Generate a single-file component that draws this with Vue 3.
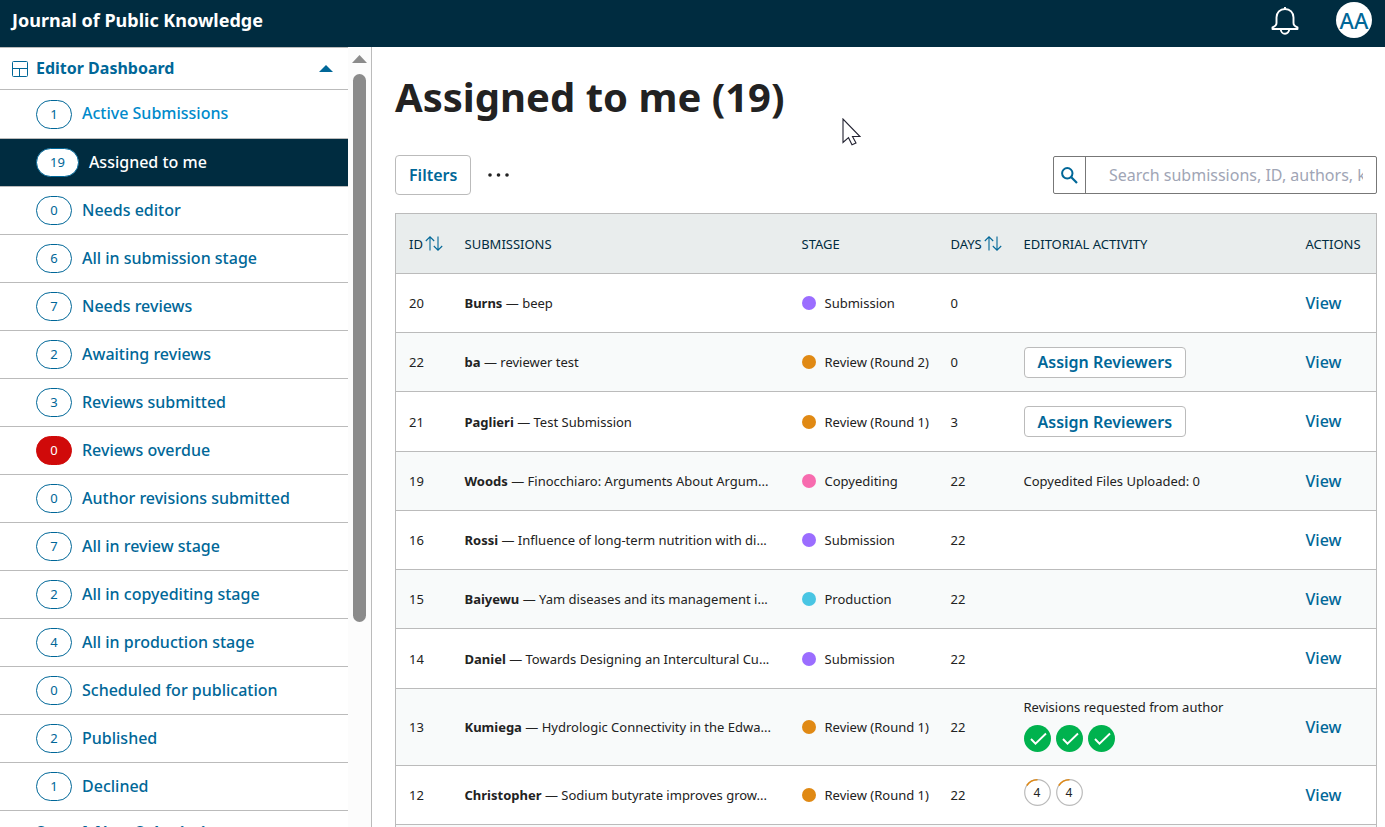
<script setup>
import { ref } from 'vue'

const navItems = [
  { count: 1, label: 'Active Submissions', state: 'hover' },
  { count: 19, label: 'Assigned to me', state: 'active' },
  { count: 0, label: 'Needs editor' },
  { count: 6, label: 'All in submission stage' },
  { count: 7, label: 'Needs reviews' },
  { count: 2, label: 'Awaiting reviews' },
  { count: 3, label: 'Reviews submitted' },
  { count: 0, label: 'Reviews overdue', state: 'overdue' },
  { count: 0, label: 'Author revisions submitted' },
  { count: 7, label: 'All in review stage' },
  { count: 2, label: 'All in copyediting stage' },
  { count: 4, label: 'All in production stage' },
  { count: 0, label: 'Scheduled for publication' },
  { count: 2, label: 'Published' },
  { count: 1, label: 'Declined' },
]

const submissions = [
  { id: 20, author: 'Burns', title: 'beep', stage: 'Submission', tone: 'submission', days: 0 },
  { id: 22, author: 'ba', title: 'reviewer test', stage: 'Review (Round 2)', tone: 'review', days: 0, action: 'Assign Reviewers' },
  { id: 21, author: 'Paglieri', title: 'Test Submission', stage: 'Review (Round 1)', tone: 'review', days: 3, action: 'Assign Reviewers' },
  { id: 19, author: 'Woods', title: 'Finocchiaro: Arguments About Argum...', stage: 'Copyediting', tone: 'copyediting', days: 22, note: 'Copyedited Files Uploaded: 0' },
  { id: 16, author: 'Rossi', title: 'Influence of long-term nutrition with di...', stage: 'Submission', tone: 'submission', days: 22 },
  { id: 15, author: 'Baiyewu', title: 'Yam diseases and its management i...', stage: 'Production', tone: 'production', days: 22 },
  { id: 14, author: 'Daniel', title: 'Towards Designing an Intercultural Cu...', stage: 'Submission', tone: 'submission', days: 22 },
  { id: 13, author: 'Kumiega', title: 'Hydrologic Connectivity in the Edwa...', stage: 'Review (Round 1)', tone: 'review', days: 22, note: 'Revisions requested from author', done: 3 },
  { id: 12, author: 'Christopher', title: 'Sodium butyrate improves grow...', stage: 'Review (Round 1)', tone: 'review', days: 22, pending: [4, 4] },
]

const query = ref('')
</script>

<template>
  <div class="app">
    <header class="topbar">
      <a class="brand" href="#">Journal of Public Knowledge</a>
      <div class="tools">
        <button class="bell" type="button" aria-label="Notifications">
          <svg width="28" height="30" viewBox="0 0 28 30" fill="none" stroke="#fff" stroke-width="1.9" stroke-linejoin="round">
            <path d="M14 1v2M14 3c-5 0-8.500 3.600-8.500 8.500v5.500c0 2.200-1.300 3.300-4 4.300V23h25V21.300c-2.700-1-4-2.100-4-4.300v-5.500C22.500 6.600 19 3 14 3z" />
            <path d="M9.800 23.200a4.200 4.600 0 0 0 8.400 0" />
          </svg>
        </button>
        <button class="avatar" type="button">AA</button>
      </div>
    </header>

    <div class="body">
      <aside class="sidebar">
        <nav class="nav">
          <button class="nav-head" type="button">
            <svg width="16" height="16" viewBox="0 0 16 16" fill="none" stroke="#006798" stroke-width="1">
              <rect x=".5" y=".5" width="15" height="15" rx="1" />
              <path d="M.5 7.500h15M7.500 7.500v8" />
            </svg>
            <span class="nav-title">Editor Dashboard</span>
            <svg width="14" height="7" viewBox="0 0 14 7"><path d="M7 0l7 7H0z" fill="#006798" /></svg>
          </button>
          <a v-for="item in navItems" :key="item.label" href="#" class="nav-item" :class="item.state">
            <span class="count">{{ item.count }}</span>
            <span class="label">{{ item.label }}</span>
          </a>
          <a href="#" class="nav-item next">Start A New Submission</a>
        </nav>
        <div class="scrollbar" aria-hidden="true">
          <svg width="15" height="8" viewBox="0 0 15 8"><path d="M7.500 0L15 8H0z" fill="#8b8b8b" /></svg>
          <div class="thumb"></div>
        </div>
      </aside>

      <main class="main">
        <h1>Assigned to me (19)</h1>
        <div class="controls">
          <button class="btn filters" type="button">Filters</button>
          <button class="more" type="button" aria-label="More options">
            <svg width="22" height="4" viewBox="0 0 22 4" fill="#222">
              <circle cx="2" cy="2" r="1.800" /><circle cx="10.500" cy="2" r="1.800" /><circle cx="19" cy="2" r="1.800" />
            </svg>
          </button>
          <form class="search" @submit.prevent>
            <label for="search-box" aria-label="Search submissions">
              <svg width="17" height="17" viewBox="0 0 17 17" fill="none" stroke="#006798">
                <circle cx="6.300" cy="6.300" r="5.200" stroke-width="2" />
                <path d="M10.300 10.300L16 16" stroke-width="2.200" />
              </svg>
            </label>
            <input id="search-box" v-model="query" type="text" placeholder="Search submissions, ID, authors, keywords, etc." />
          </form>
        </div>

        <table>
          <colgroup>
            <col class="c-id" /><col class="c-sub" /><col class="c-stage" /><col class="c-days" /><col /><col class="c-act" />
          </colgroup>
          <thead>
            <tr>
              <th v-for="head in ['ID', 'Submissions', 'Stage', 'Days', 'Editorial Activity', 'Actions']" :key="head" scope="col">
                <button v-if="head === 'ID' || head === 'Days'" class="sort" type="button">
                  {{ head }}
                  <svg width="18" height="15" viewBox="0 0 18 15" fill="none" stroke="#006798" stroke-width="1.100">
                    <path d="M5 14.500V1M.8 5L5 .8 9.200 5M13 .5V14M8.800 10l4.200 4.200L17.200 10" />
                  </svg>
                </button>
                <template v-else>{{ head }}</template>
              </th>
            </tr>
          </thead>
          <tbody>
            <tr v-for="row in submissions" :key="row.id">
              <td>{{ row.id }}</td>
              <td class="title"><b>{{ row.author }}</b> — {{ row.title }}</td>
              <td>
                <span class="stage"><i class="dot" :class="row.tone"></i>{{ row.stage }}</span>
              </td>
              <td>{{ row.days }}</td>
              <td>
                <button v-if="row.action" class="btn assign" type="button">{{ row.action }}</button>
                <div v-if="row.note">{{ row.note }}</div>
                <div v-if="row.done" class="marks">
                  <svg v-for="n in row.done" :key="n" width="27" height="27" viewBox="0 0 27 27">
                    <circle cx="13.500" cy="13.500" r="13.500" fill="#00b24e" />
                    <path d="M7 14l4.500 4.700L22 8.500" fill="none" stroke="#fff" stroke-width="1.900" />
                  </svg>
                </div>
                <div v-if="row.pending" class="marks pending">
                  <span v-for="(n, i) in row.pending" :key="i" class="ring">
                    <svg width="27" height="27" viewBox="0 0 27 27" fill="none">
                      <circle cx="13.500" cy="13.500" r="12.800" stroke="#bbb" stroke-width="1.200" />
                      <path d="M2.800 6.500A12.800 12.800 0 0 1 13.500 .8" stroke="#e08914" stroke-width="1.600" />
                    </svg>
                    <span class="ring-num">{{ n }}</span>
                  </span>
                </div>
              </td>
              <td><a class="view" href="#">View</a></td>
            </tr>
            <tr>
              <td colspan="6"></td>
            </tr>
          </tbody>
        </table>
      </main>
    </div>

    <svg class="pointer" width="19" height="28" viewBox="0 0 19 28">
      <path d="M1 1v23.500l5.500-4.800 3.500 7 4-1.700-3.500-6.500H18z" fill="#fff" stroke="#222231" stroke-width="1.100" />
    </svg>
  </div>
</template>

<style>
body {
  margin: 0;
}
</style>

<style scoped>
.app {
  position: relative;
  display: flex;
  flex-direction: column;
  height: 100vh;
  overflow: hidden;
  font-family: "Noto Sans", sans-serif;
  font-size: 13px;
  line-height: 20px;
  color: #222;
  background: #fff;
}
* {
  box-sizing: border-box;
}
button,
input {
  font: inherit;
  color: inherit;
  background: none;
  border: 0;
  padding: 0;
  margin: 0;
}
a {
  text-decoration: none;
}
svg {
  display: block;
  flex: none;
}
.topbar {
  display: flex;
  justify-content: space-between;
  flex: none;
  height: 47px;
  padding: 2px 13px 0 12px;
  background: #002c40;
}
.brand {
  font-size: 18px;
  line-height: 36px;
  font-weight: 700;
  color: #fff;
}
.tools {
  display: flex;
  gap: 37px;
}
.bell {
  height: 38px;
}
.avatar {
  width: 36px;
  height: 36px;
  border-radius: 50%;
  background: #fff;
  color: #006798;
  font-size: 22px;
  line-height: 36px;
  font-weight: 500;
}
.body {
  display: flex;
  flex: 1;
  min-height: 0;
}
.sidebar {
  display: flex;
  flex: none;
  width: 372px;
  border-right: 1px solid #bbb;
}
.nav {
  flex: 1;
  overflow: hidden;
  font-size: 16px;
  color: #006798;
}
.nav-head {
  display: flex;
  align-items: center;
  gap: 8px;
  width: 100%;
  height: 43px;
  padding: 0 15px 0 12px;
  border-top: 1px solid #bbb;
  border-bottom: 1px solid #bbb;
  font-weight: 700;
  text-align: left;
}
.nav-title {
  flex: 1;
}
.nav-title,
.label {
  padding-bottom: 2px;
}
.nav-item {
  display: flex;
  align-items: center;
  gap: 10px;
  height: 48px;
  padding-left: 36px;
  border-bottom: 1px solid #bbb;
  font-weight: 500;
  color: #006798;
}
.nav-item.hover {
  height: 49px;
  color: #008acb;
}
.nav-item.active {
  color: #fff;
  background: #002c40;
}
.nav-item.next {
  height: 43px;
  font-weight: 700;
}
.count {
  min-width: 36px;
  padding: 0 13px;
  border: 1px solid #006798;
  border-radius: 15px;
  font-size: 13px;
  line-height: 27px;
  font-weight: 400;
  text-align: center;
  color: #006798;
  background: #fff;
}
.overdue .count {
  border-color: #d00a0a;
  background: #d00a0a;
  color: #fff;
}
.scrollbar {
  display: flex;
  flex-direction: column;
  align-items: center;
  gap: 11px;
  width: 23px;
  padding-top: 8px;
  background: #fcfcfc;
}
.thumb {
  width: 13px;
  height: 71%;
  border-radius: 7px;
  background: #8b8b8b;
}
.main {
  flex: 1;
  min-width: 0;
  padding: 24px 8px 0 23px;
}
h1 {
  margin: 0;
  font-size: 40px;
  line-height: 52px;
  font-weight: 700;
}
.controls {
  display: flex;
  align-items: center;
  margin: 32px 0 18px;
}
.btn {
  border: 1px solid #bbb;
  border-radius: 4px;
  background: #fff;
  color: #006798;
  font-size: 16px;
  font-weight: 600;
}
.filters {
  height: 40px;
  padding: 0 13px;
}
.more {
  padding: 8px 17px;
}
.search {
  display: flex;
  width: 324px;
  height: 38px;
  margin-left: auto;
  border: 1px solid #777;
  border-radius: 2px;
}
.search label {
  display: flex;
  align-items: center;
  justify-content: center;
  flex: none;
  width: 32px;
  border-right: 1px solid #777;
}
.search input {
  flex: 1;
  min-width: 0;
  margin: 0 13px 0 23px;
  font-size: 16px;
  outline: 0;
}
.search input::placeholder {
  color: #a0a5b5;
  opacity: 1;
}
table {
  width: 100%;
  table-layout: fixed;
  border-collapse: collapse;
  border: 1px solid #bbb;
}
.c-id {
  width: 61px;
}
.c-sub {
  width: 337px;
}
.c-stage {
  width: 149px;
}
.c-days {
  width: 73px;
}
.c-act {
  width: 79px;
}
th,
td {
  height: 59px;
  padding: 0 8px;
  border-bottom: 1px solid #bbb;
  text-align: left;
  vertical-align: middle;
}
tbody tr:nth-child(4n + 3) td {
  height: 60px;
}
th {
  height: 60px;
  background: #e9eded;
  font-weight: 400;
  text-transform: uppercase;
  color: #002c40;
  white-space: nowrap;
}
th:first-child,
td:first-child {
  padding-left: 13px;
}
tbody tr:nth-child(even) {
  background: #f8fafa;
}
.sort {
  display: flex;
  align-items: center;
  gap: 2px;
  text-transform: uppercase;
}
.title {
  overflow: hidden;
  white-space: nowrap;
}
.stage {
  display: flex;
  align-items: center;
  gap: 9px;
  white-space: nowrap;
}
.dot {
  width: 14px;
  height: 14px;
  border-radius: 50%;
}
.dot.submission {
  background: #9b6dff;
}
.dot.review {
  background: #e08914;
}
.dot.copyediting {
  background: #f76bae;
}
.dot.production {
  background: #49c5e3;
}
.assign {
  height: 31px;
  padding: 0 13px;
}
.marks {
  display: flex;
  gap: 5px;
  margin: 8px 0 5px;
}
tr:has(.marks:not(.pending)) td {
  height: 77px;
}
.marks.pending {
  margin: 0 0 5px;
}
.ring {
  position: relative;
}
.ring-num {
  position: absolute;
  inset: 0;
  font-size: 12px;
  line-height: 27px;
  text-align: center;
}
.view {
  font-size: 16px;
  font-weight: 500;
  color: #006798;
}
.pointer {
  position: absolute;
  left: 842px;
  top: 118px;
}
</style>
